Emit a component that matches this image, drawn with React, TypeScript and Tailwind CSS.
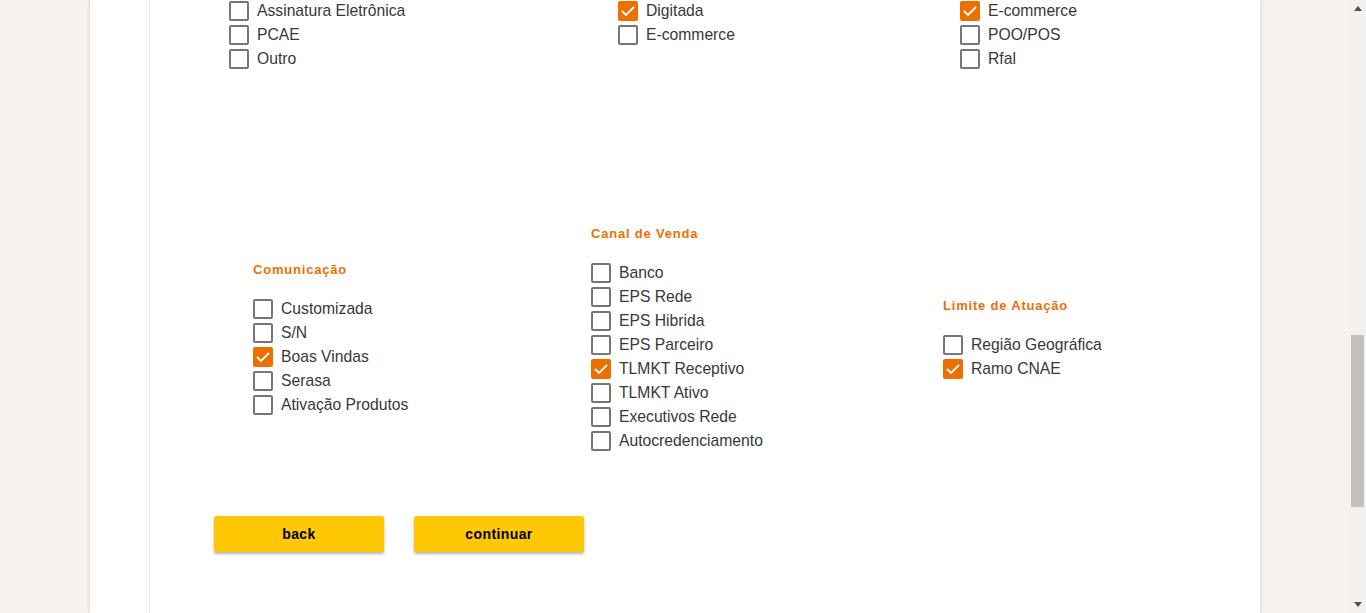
import React from "react";

type Item = { label: string; checked?: boolean };

function Check({ checked }: { checked?: boolean }) {
  if (checked) {
    return (
      <span className="w-[20px] h-[20px] shrink-0 rounded-[2px] bg-[#ec7000] flex items-center justify-center">
        <svg width="20" height="20" viewBox="0 0 20 20">
          <polyline points="4,10 8,14 16,6" fill="none" stroke="#ffffff" strokeWidth="1.8" />
        </svg>
      </span>
    );
  }
  return <span className="w-[20px] h-[20px] shrink-0 rounded-[2px] border-2 border-[#767676] bg-white" />;
}

function Row({ item }: { item: Item }) {
  return (
    <div className="h-[24px] flex items-center gap-[8px]">
      <Check checked={item.checked} />
      <span className="text-[15.7px] leading-[20px] text-[#383838] whitespace-nowrap">{item.label}</span>
    </div>
  );
}

function Group({ title, items, width }: { title?: string; items: Item[]; width?: string }) {
  return (
    <div className={"flex flex-col " + (width ?? "")}>
      {title && (
        <div className="h-[16px] leading-[16px] mb-[19px] text-[13px] font-bold tracking-[0.8px] text-[#ec7000] whitespace-nowrap">
          {title}
        </div>
      )}
      {items.map((it) => (
        <Row key={it.label} item={it} />
      ))}
    </div>
  );
}

export default function App() {
  return (
    <div className="w-[1366px] h-[613px] overflow-hidden flex bg-[#f5f2ef] font-['Liberation_Sans',Arial,sans-serif]">
      <div className="flex-1 flex">
        <div className="w-[90px] shrink-0" />
        <main className="w-[1170px] h-full bg-white shadow-[0_0_4px_rgba(0,0,0,0.18)] flex">
          <div className="w-[60px] shrink-0 border-r border-[#e6e6e6]" />
          <div className="flex-1 flex flex-col">
            <div className="flex mt-[-1px] pl-[79px]">
              <Group
                width="w-[389px]"
                items={[{ label: "Assinatura Eletrônica" }, { label: "PCAE" }, { label: "Outro" }]}
              />
              <Group
                width="w-[342px]"
                items={[{ label: "Digitada", checked: true }, { label: "E-commerce" }]}
              />
              <Group
                items={[{ label: "E-commerce", checked: true }, { label: "POO/POS" }, { label: "Rfal" }]}
              />
            </div>

            <div className="flex items-center mt-[155px] pl-[103px]">
              <Group
                width="w-[338px]"
                title="Comunicação"
                items={[
                  { label: "Customizada" },
                  { label: "S/N" },
                  { label: "Boas Vindas", checked: true },
                  { label: "Serasa" },
                  { label: "Ativação Produtos" },
                ]}
              />
              <Group
                width="w-[352px]"
                title="Canal de Venda"
                items={[
                  { label: "Banco" },
                  { label: "EPS Rede" },
                  { label: "EPS Hibrida" },
                  { label: "EPS Parceiro" },
                  { label: "TLMKT Receptivo", checked: true },
                  { label: "TLMKT Ativo" },
                  { label: "Executivos Rede" },
                  { label: "Autocredenciamento" },
                ]}
              />
              <Group
                title="Limite de Atuação"
                items={[{ label: "Região Geográfica" }, { label: "Ramo CNAE", checked: true }]}
              />
            </div>

            <div className="flex gap-[30px] mt-[63px] pl-[64px]">
              <button className="w-[170px] h-[36px] rounded-[2px] bg-[#fec804] shadow-[0_2px_3px_rgba(0,0,0,0.3)] text-[14px] font-bold tracking-[0.4px] text-black">
                back
              </button>
              <button className="w-[170px] h-[36px] rounded-[2px] bg-[#fec804] shadow-[0_2px_3px_rgba(0,0,0,0.3)] text-[14px] font-bold tracking-[0.4px] text-black">
                continuar
              </button>
            </div>
          </div>
        </main>
      </div>
      <div className="w-[17px] shrink-0 h-full bg-[#f1f1f1] flex flex-col">
        <div className="h-[17px] flex items-center justify-center">
          <svg width="8" height="5" viewBox="0 0 8 5">
            <polygon points="0,5 8,5 4,0" fill="#505050" />
          </svg>
        </div>
        <div className="mt-[318px] h-[172px] mx-[2px] bg-[#c1c1c1]" />
        <div className="flex-1" />
        <div className="h-[17px] flex items-center justify-center">
          <svg width="8" height="5" viewBox="0 0 8 5">
            <polygon points="0,0 8,0 4,5" fill="#505050" />
          </svg>
        </div>
      </div>
    </div>
  );
}
